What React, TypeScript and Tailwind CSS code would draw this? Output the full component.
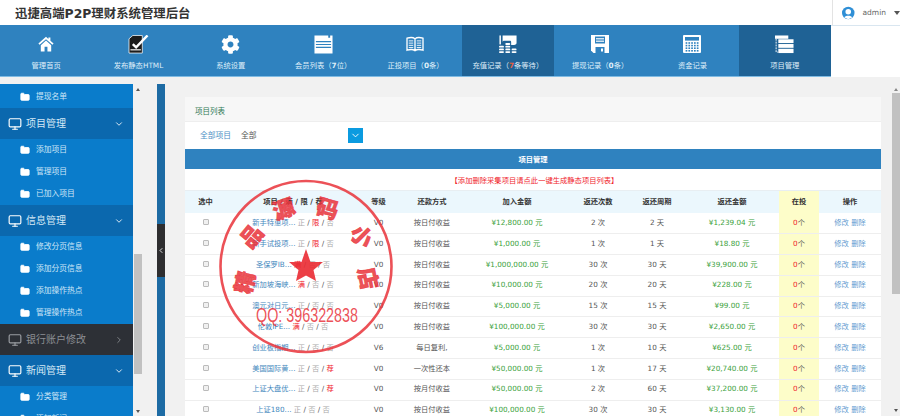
import { ChevronDown, ChevronLeft, ChevronRight, Folder, Monitor } from 'lucide-react'
import { FaCog } from 'react-icons/fa'

const font = { fontFamily: '"DejaVu Sans","Noto Sans CJK SC",sans-serif' }

function HomeIcon() {
  return (
    <svg width="16" height="18" viewBox="0 0 20 20" fill="#fff">
      <path d="M10 1 L0.5 9.5 L2 11 L10 4 L18 11 L19.5 9.5 L15.5 6 V2 H13 V3.8 Z" />
      <path d="M3.5 11.5 L10 5.6 L16.5 11.5 V19.5 H11.8 V13.5 H8.2 V19.5 H3.5 Z" />
    </svg>
  )
}

function PublishIcon() {
  return (
    <svg width="21" height="19" viewBox="0 0 22 20">
      <path d="M1 4 L5 0.5 H15 V19 H1 Z" fill="#1c1c1c" stroke="#fff" strokeWidth="0.8" />
      <path d="M5 9.5 L8.5 13 L20.5 0.5" fill="none" stroke="#fff" strokeWidth="2.6" />
      <rect x="2.5" y="15" width="11" height="1.2" fill="#fff" />
    </svg>
  )
}

function ListIcon() {
  return (
    <svg width="19" height="19" viewBox="0 0 20 20">
      <path d="M0.5 0.5 H15 V3 H17 V0.5 H19.5 V19.5 H0.5 Z" fill="#fff" />
      <path d="M2 7 H18 M2 10 H18 M2 13 H18" stroke="#2f82bf" strokeWidth="1.2" />
    </svg>
  )
}

function BookIcon() {
  return (
    <svg width="18" height="16" viewBox="0 0 20 18" fill="none" stroke="#fff" strokeWidth="1.5">
      <path d="M10 3 C8 1.5 4 1.5 1 2.5 V16 C4 15 8 15 10 16.5 C12 15 16 15 19 16 V2.5 C16 1.5 12 1.5 10 3 Z M10 3 V16.5" />
      <path d="M3 5.5 H8 M3 8 H8 M3 10.5 H8 M3 13 H8 M12 5.5 H17 M12 8 H17 M12 10.5 H17 M12 13 H17" strokeWidth="1" />
    </svg>
  )
}

function CoinsIcon() {
  return (
    <svg width="18" height="18" viewBox="0 0 20 20" fill="#fff">
      <rect x="0.5" y="0.5" width="1.6" height="10" />
      <path d="M4 0.5 H19.5 V9 C19.5 11 17.5 11 17 11 H13.5 V8 C13.5 7 13 6.5 12 6.5 H6 C5 6.5 4 7 4 8 Z" />
      <rect x="0" y="12" width="5.5" height="2" rx="1" />
      <rect x="0" y="15" width="5.5" height="2" rx="1" />
      <rect x="0" y="18" width="5.5" height="2" rx="1" />
      <rect x="7" y="9" width="5.5" height="2" rx="1" />
      <rect x="7" y="12" width="5.5" height="2" rx="1" />
      <rect x="7" y="15" width="5.5" height="2" rx="1" />
      <rect x="7" y="18" width="5.5" height="2" rx="1" />
      <rect x="14" y="15" width="5.5" height="2" rx="1" />
      <rect x="14" y="18" width="5.5" height="2" rx="1" />
    </svg>
  )
}

function FloppyIcon() {
  return (
    <svg width="18" height="18" viewBox="0 0 18 18">
      <path d="M0 0 H18 V18 H2.5 L0 15.5 Z" fill="#fff" />
      <path d="M4 1.5 H14 V8.5 H4 Z" fill="#2f82bf" />
      <path d="M5 3.5 H13 M5 5 H13 M5 6.5 H13" stroke="#fff" strokeWidth="0.8" />
      <path d="M4.5 12 H13.5 V18 H4.5 Z" fill="#2f82bf" />
      <rect x="10" y="13.5" width="2" height="3" fill="#fff" />
    </svg>
  )
}

function CalcIcon() {
  const keys = [8, 10.6, 13.2, 15.8]
  const cols = [2.6, 5.4, 8.2, 11, 13.8]
  return (
    <svg width="18" height="18" viewBox="0 0 18 18">
      <rect width="18" height="18" rx="1" fill="#fff" />
      <rect x="2" y="2" width="14" height="3.6" fill="#2f82bf" />
      {keys.map((y) =>
        cols.map((x) => <rect key={`${x}-${y}`} x={x} y={y - 0.8} width="1.7" height="1.6" fill="#2f82bf" />),
      )}
    </svg>
  )
}

function StackIcon() {
  return (
    <svg width="19" height="19" viewBox="0 0 20 20" fill="#fff">
      <rect x="0" y="0.5" width="14" height="3.5" />
      <rect x="3.5" y="4.5" width="16" height="4" />
      <rect x="3.5" y="9.5" width="16" height="4" />
      <rect x="3.5" y="14.5" width="16" height="4.5" />
      <path d="M1.2 4 V18 H3" fill="none" stroke="#fff" strokeWidth="1" strokeDasharray="2 1" />
    </svg>
  )
}

const navItems = [
  { icon: <HomeIcon />, label: <>管理首页</> },
  { icon: <PublishIcon />, label: <>发布静态HTML</> },
  { icon: <FaCog size={19} color="#fff" />, label: <>系统设置</> },
  { icon: <ListIcon />, label: <>会员列表（<b>7</b>位）</> },
  { icon: <BookIcon />, label: <>正投项目（<b>0</b>条）</> },
  { icon: <CoinsIcon />, label: <>充值记录（<b className="text-[#e8603c]">7</b>条等待）</>, dark: true },
  { icon: <FloppyIcon />, label: <>提现记录（<b>0</b>条）</> },
  { icon: <CalcIcon />, label: <>资金记录</> },
  { icon: <StackIcon />, label: <>项目管理</>, dark: true },
]

type Row = { name: string; flags: [string, boolean][]; level: string; way: string; amount: string; times: string; period: string; back: string }

const zheng: [string, boolean] = ['正', false]
const xian: [string, boolean] = ['限', true]
const man: [string, boolean] = ['满', true]
const fou: [string, boolean] = ['否', false]
const jian: [string, boolean] = ['荐', true]

const rows: Row[] = [
  { name: '新手特惠项...', flags: [zheng, xian, fou], level: 'V0', way: '按日付收益', amount: '¥12,800.00 元', times: '2 次', period: '2 天', back: '¥1,239.04 元' },
  { name: '新手试投项...', flags: [zheng, xian, fou], level: 'V0', way: '按日付收益', amount: '¥1,000.00 元', times: '1 次', period: '1 天', back: '¥18.80 元' },
  { name: '圣保罗IB...', flags: [man, fou, fou], level: 'V0', way: '按日付收益', amount: '¥1,000,000.00 元', times: '30 次', period: '30 天', back: '¥39,900.00 元' },
  { name: '新加坡海峡...', flags: [man, fou, fou], level: 'V0', way: '按日付收益', amount: '¥10,000.00 元', times: '20 次', period: '20 天', back: '¥228.00 元' },
  { name: '澳元对日元...', flags: [zheng, fou, fou], level: 'V0', way: '按日付收益', amount: '¥5,000.00 元', times: '15 次', period: '15 天', back: '¥99.00 元' },
  { name: '伦敦IPE...', flags: [man, fou, fou], level: 'V0', way: '按日付收益', amount: '¥100,000.00 元', times: '30 次', period: '30 天', back: '¥2,650.00 元' },
  { name: '创业板指期...', flags: [zheng, fou, fou], level: 'V6', way: '每日复利,', amount: '¥5,000.00 元', times: '1 次', period: '10 天', back: '¥625.00 元' },
  { name: '美国国际黄...', flags: [zheng, fou, jian], level: 'V0', way: '一次性还本', amount: '¥50,000.00 元', times: '1 次', period: '17 天', back: '¥20,740.00 元' },
  { name: '上证大盘优...', flags: [zheng, fou, jian], level: 'V0', way: '按月付收益', amount: '¥50,000.00 元', times: '2 次', period: '60 天', back: '¥37,200.00 元' },
  { name: '上证180...', flags: [zheng, fou, fou], level: 'V0', way: '按日付收益', amount: '¥100,000.00 元', times: '30 次', period: '30 天', back: '¥3,130.00 元' },
]

const headers = ['选中', '项目 / 满 / 限 / 荐', '等级', '还款方式', '加入金额', '返还次数', '返还周期', '返还金额', '在投', '操作']

function SideHead({ label, dark }: { label: string; dark?: boolean }) {
  return (
    <div className={`h-[31px] flex items-center pl-2 pr-[9px] ${dark ? 'bg-[#2d3036] text-[#8c8f94]' : 'bg-[#0b68ae] text-[#d5e8f6]'}`}>
      <Monitor size={14} strokeWidth={2} className={dark ? 'text-[#9a9da2]' : 'text-white'} />
      <span className="ml-[4px] text-[10px] flex-1">{label}</span>
      {dark ? <ChevronRight size={10} /> : <ChevronDown size={10} className="text-white" />}
    </div>
  )
}

function SideLink({ label }: { label: string }) {
  return (
    <div className="h-[22px] flex items-center pl-5 text-[7.75px] text-[#cfe6f7]">
      <Folder size={10} fill="#fff" stroke="#fff" />
      <span className="ml-[6px]">{label}</span>
    </div>
  )
}

function Stamp() {
  const chars: [string, number, number, number][] = [
    ['精', 243, 282, -78],
    ['品', 250, 235, -50],
    ['源', 283, 207, -20],
    ['码', 328, 207, 15],
    ['小', 363, 235, 45],
    ['店', 370, 278, 78],
  ]
  return (
    <svg className="absolute left-[215px] top-[175px] pointer-events-none" width="185" height="185" viewBox="215 175 185 185">
      <circle cx="306" cy="266.5" r="85.5" fill="none" stroke="#e9323a" strokeOpacity="0.85" strokeWidth="2.6" />
      <path d="M306 249 L310.5 262 L323 262 L313.5 270 L316 281 L306 275.5 L296 281 L298.5 270 L289 262 L301.5 262 Z" fill="#ea2a32" fillOpacity="0.9" />
      {chars.map(([c, x, y, r], i) => (
        <text key={i} x={x} y={y} transform={`rotate(${r} ${x} ${y})`} textAnchor="middle" dominantBaseline="central" fontSize="22" fontWeight="900" stroke="#e9323a" strokeWidth="0.5" fontFamily='"Noto Sans CJK SC",sans-serif' fill="#e9323a" fillOpacity="0.85">{c}</text>
      ))}
      <text x="307" y="322" textAnchor="middle" fontSize="20" fontFamily='"Liberation Sans",sans-serif' fill="#e9323a" fillOpacity="0.85" textLength="102" lengthAdjust="spacingAndGlyphs">QQ: 396322838</text>
    </svg>
  )
}

export default function App() {
  return (
    <div className="relative w-[900px] h-[416px] overflow-hidden bg-white text-[#555]" style={font}>
      <div className="h-[26px] flex border-b border-[#d9e6f0]">
        <h1 className="pl-[15px] text-[12.4px] leading-[28px] font-bold text-[#333] flex-1">迅捷高端P2P理财系统管理后台</h1>
        <div className="w-[68px] border-l border-[#e3e3e3] flex items-center pl-[9px] text-[7.5px] text-[#666]">
          <svg width="14" height="14" viewBox="0 0 14 14">
            <circle cx="7" cy="7" r="7" fill="#2f8fd6" />
            <circle cx="7" cy="5.6" r="3.1" fill="#fff" />
            <path d="M2.6 12 C3.5 9.6 10.5 9.6 11.4 12 L7 14 Z" fill="#fff" />
          </svg>
          <span className="ml-2">admin</span>
          <span className="ml-2 w-0 h-0 border-x-[3px] border-x-transparent border-t-[4px] border-t-[#555]" />
        </div>
      </div>

      <div className="w-[831px] h-[51px] bg-[#2f82bf] grid grid-cols-9 -mt-px">
        {navItems.map((item, i) => (
          <div key={i} className={`flex flex-col items-center pt-[9px] text-[7.3px] text-[#dfeef9] ${item.dark ? 'bg-[#1f6295]' : ''}`}>
            <div className="h-[20px] flex items-center justify-center">{item.icon}</div>
            <div className="mt-[7px] whitespace-nowrap">{item.label}</div>
          </div>
        ))}
      </div>
      <div className="w-[831px] h-px bg-[#7fbbe3]" />

      <div className="flex h-[339px] bg-[#f1f1f1]">
        <div className="w-[157px] pt-[7px] flex shrink-0">
          <div className="w-[133px] bg-[#0a7ccb] overflow-hidden pt-[2px]">
            <SideLink label="提现名单" />
            <SideHead label="项目管理" />
            <SideLink label="添加项目" />
            <SideLink label="管理项目" />
            <SideLink label="已加入项目" />
            <SideHead label="信息管理" />
            <SideLink label="修改分页信息" />
            <SideLink label="添加分页信息" />
            <SideLink label="添加操作热点" />
            <SideLink label="管理操作热点" />
            <SideHead label="银行账户修改" dark />
            <SideHead label="新闻管理" />
            <SideLink label="分类管理" />
            <SideLink label="添加新闻" />
          </div>
          <div className="w-[9px] flex flex-col items-center">
            <span className="mt-[4px] w-0 h-0 border-x-[2px] border-x-transparent border-b-[3px] border-b-[#555]" />
            <div className="w-[8px] h-[120px] bg-[#c1c1c1] mt-[163px]" />
            <span className="mb-[3px] mt-auto w-0 h-0 border-x-[2px] border-x-transparent border-t-[3px] border-t-[#555]" />
          </div>
        </div>
        <div className="w-[8px] mt-[7px] bg-[#1d6ba4] shrink-0 flex flex-col">
          <div className="h-[53px] mt-[140px] bg-[#2e2e30] flex items-center justify-center text-white">
            <ChevronLeft size={9} strokeWidth={2.5} />
          </div>
        </div>

        <div className="w-[716px] pl-[20px] pt-[20px] shrink-0">
          <div className="w-[696px] bg-white">
            <div className="h-[25px] bg-[#f7f7f7] border-b border-[#eee] pl-[10px] leading-[29px] text-[7.5px] text-[#2f7a55]">项目列表</div>
            <div className="h-[27px] flex items-center pl-[15px] text-[7.75px]">
              <span className="text-[#4d8fc4]">全部项目</span>
              <span className="ml-[10px] w-[107px] text-[#555]">全部</span>
              <span className="w-[15px] h-[15px] bg-[#0b9be0] flex items-center justify-center text-white"><ChevronDown size={11} /></span>
            </div>
            <div className="h-[20px] bg-[#2f82bf] text-white text-[7.3px] font-bold text-center leading-[21px]">项目管理</div>
            <div className="h-[22px] text-[#f0242c] text-[7.3px] text-center leading-[23px] border-b border-[#e8eef2] pl-[3px]">【添加删除采集项目请点此一键生成静态项目列表】</div>
            <table className="w-[696px] table-fixed border-collapse text-[7.25px] text-center">
              <colgroup>
                <col className="w-[41px]" />
                <col className="w-[134px]" />
                <col className="w-[37px]" />
                <col className="w-[70px]" />
                <col className="w-[100px]" />
                <col className="w-[62px]" />
                <col className="w-[56px]" />
                <col className="w-[94px]" />
                <col className="w-[40px]" />
                <col className="w-[62px]" />
              </colgroup>
              <thead>
                <tr className="h-[22px] bg-[#ebf7fd] text-[#333]">
                  {headers.map((h) => (
                    <th key={h} className={`font-bold whitespace-nowrap ${h === '在投' ? 'bg-[#fdfdc9]' : ''}`}>{h}</th>
                  ))}
                </tr>
              </thead>
              <tbody>
                {rows.map((r) => (
                  <tr key={r.name} className="h-[20.8px] border-b border-[#eee]">
                    <td><span className="inline-block w-[6px] h-[6px] border border-[#bbb] bg-[#f0f0f0] rounded-[1px]" /></td>
                    <td className="whitespace-nowrap">
                      <span className="text-[#3f87bd]">{r.name}</span>
                      {r.flags.map(([t, red], i) => (
                        <span key={i}>
                          <span className="text-[#555]">{i === 0 ? ' ' : ' / '}</span>
                          <span className={red ? 'text-[#f0242c]' : 'text-[#aaa]'}>{t}</span>
                        </span>
                      ))}
                    </td>
                    <td>{r.level}</td>
                    <td className="whitespace-nowrap">{r.way}</td>
                    <td className="text-[#3aa13a] whitespace-nowrap">{r.amount}</td>
                    <td>{r.times}</td>
                    <td>{r.period}</td>
                    <td className="text-[#3aa13a] whitespace-nowrap">{r.back}</td>
                    <td className="bg-[#fdfdc9]"><span className="text-[#f0242c]">0</span>个</td>
                    <td className="text-[#5f9bd0]">修改 删除</td>
                  </tr>
                ))}
              </tbody>
            </table>
          </div>
        </div>

        <div className="w-[19px] flex justify-end shrink-0">
          <div className="w-[8px] flex flex-col items-center">
            <span className="mt-[11px] w-0 h-0 border-x-[2px] border-x-transparent border-b-[3px] border-b-[#888]" />
            <div className="w-[8px] h-[201px] bg-[#c1c1c1] mt-[2px]" />
            <span className="mt-auto mb-[4px] w-0 h-0 border-x-[2px] border-x-transparent border-t-[3px] border-t-[#555]" />
          </div>
        </div>
      </div>
      <Stamp />
    </div>
  )
}
